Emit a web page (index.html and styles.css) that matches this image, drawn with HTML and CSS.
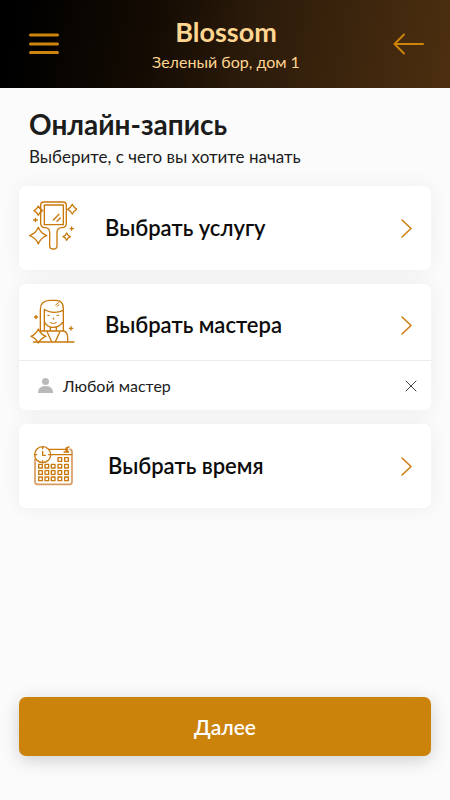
FILE: index.html
```html
<!DOCTYPE html>
<html lang="ru">
<head>
<meta charset="utf-8">
<meta name="viewport" content="width=device-width, initial-scale=1">
<title>Blossom</title>
<link rel="stylesheet" href="styles.css">
</head>
<body>
<header class="topbar">
  <button class="icon-button" type="button" aria-label="Меню">
    <svg width="30" height="22" viewBox="0 0 30 22"><path d="M1.5 2h27M1.5 11h27M1.5 19.500h27" stroke-width="3"/></svg>
  </button>
  <div class="salon">
    <div class="salon-name">Blossom</div>
    <div class="salon-address">Зеленый бор, дом 1</div>
  </div>
  <button class="icon-button" type="button" aria-label="Назад">
    <svg width="31" height="22" viewBox="0 0 31 22"><path d="M30 11H2M11 1.500L1.500 11l9.500 9.500" stroke-width="2"/></svg>
  </button>
</header>
<main class="page">
  <h1 class="title">Онлайн-запись</h1>
  <p class="subtitle">Выберите, с чего вы хотите начать</p>
  <div class="cards">
    <section class="card">
      <button class="choice" type="button">
        <svg class="picture" width="48" height="54" viewBox="27 33 144 162">
          <path d="M72 36h57q10 0 10 10v54q0 13-14 13-14 1-14 14v40q0 10-11 10t-11-10v-40q0-13-14-14-13 0-13-13V46q0-10 10-10z"/>
          <path d="M73 45h57v59H73zM100 90l17-17M111 94l10-10"/>
          <path d="M55 48q4 10 13 14-9 4-13 14-4-10-13-14 9-4 13-14zM157 43q4 10 14 15-10 4-14 14-5-10-14-14 9-5 14-15zM55 112q7 18 25 25-18 7-25 25-7-18-26-25 19-7 26-25zM140 129q3 8 11 11-8 3-11 11-3-8-11-11 8-3 11-11z"/>
          <path d="M41 90h11M46.500 85v10M150 116h10M155 111v10"/>
        </svg>
        <span class="choice-name">Выбрать услугу</span>
        <svg class="chevron" width="11" height="19" viewBox="0 0 11 19"><path d="M1 1l9 8.500L1 18"/></svg>
      </button>
    </section>
    <section class="card">
      <button class="choice choice-picked" type="button">
        <svg class="picture" width="48" height="54" viewBox="27 24 144 162">
          <path d="M61 124V59q0-28 29-28h18q22 0 22 25v66M73 122V58q12 9 30 9 14 0 25-5M73 95q8 17 27 17 18 0 27-14"/>
          <path d="M91 112v11h18v-11M62 123h29M82 127l13 28M109 123h22q12 2 12 22v10M119 127l-13 28"/>
          <path class="fine" d="M83 76h5M111 76h5M100 84l-1 3h3M91 98q9 7 18 0M107 45l8-7M111 49l6-5"/>
          <path class="filled" d="M55 117q7 16 23 22-16 6-23 20-7-14-22-20 15-6 22-22z"/>
          <path d="M40 156h122M43 81h10M48 76v10M148 115h10M153 110v10"/>
        </svg>
        <span class="choice-name">Выбрать мастера</span>
        <svg class="chevron" width="11" height="19" viewBox="0 0 11 19"><path d="M1 1l9 8.500L1 18"/></svg>
      </button>
      <div class="picked">
        <svg class="person" width="15" height="15" viewBox="0 0 15 15"><circle cx="7.500" cy="3.500" r="3.500"/><path d="M0 15v-1.500Q1 8 7.500 8t7.500 5.500V15z"/></svg>
        <span class="picked-name">Любой мастер</span>
        <button class="clear" type="button" aria-label="Убрать мастера">
          <svg width="12" height="12" viewBox="0 0 12 12"><path d="M1 1l10 10M11 1L1 11"/></svg>
        </button>
      </div>
    </section>
    <section class="card">
      <button class="choice" type="button">
        <svg class="picture" width="51" height="54" viewBox="27 15 153 162">
          <path class="frame" d="M45 76v67q0 8 8 8h95q8 0 8-8V53q0-6-6-7"/>
          <path d="M88 46h55M91 62h64M132 54h14l-7-6q-1-7 8-9M138 42v10"/>
          <circle class="filled" cx="68" cy="62" r="24"/>
          <path d="M68 52v12h8M68 38v6M68 80v6M44 62h6M86 62h6"/>
          <path d="M114 71h11v11h-11zM134 71h11v11h-11zM56 91h11v11H56zM75 91h11v11H75zM94 91h11v11H94zM114 91h11v11h-11zM134 91h11v11h-11zM56 110h11v11H56zM75 110h11v11H75zM94 110h11v11H94zM114 110h11v11h-11zM134 110h11v11h-11zM56 129h11v11H56zM75 129h11v11H75zM94 129h11v11H94zM114 129h11v11h-11zM134 129h11v11h-11z"/>
        </svg>
        <span class="choice-name">Выбрать время</span>
        <svg class="chevron" width="11" height="19" viewBox="0 0 11 19"><path d="M1 1l9 8.500L1 18"/></svg>
      </button>
    </section>
  </div>
  <button class="next" type="button">Далее</button>
</main>
</body>
</html>
```
FILE: styles.css
```css
* {
  box-sizing: border-box;
}

body {
  margin: 0;
  min-height: 100vh;
  display: flex;
  flex-direction: column;
  background: #fbfbfb;
  color: #1c1c1c;
  font-family: Lato, "Open Sans", sans-serif;
}

button {
  margin: 0;
  padding: 0;
  border: 0;
  background: none;
  color: inherit;
  font: inherit;
  cursor: pointer;
}

svg {
  display: block;
  flex: none;
  fill: none;
  stroke-linecap: round;
  stroke-linejoin: round;
}

.topbar {
  display: flex;
  align-items: center;
  justify-content: space-between;
  min-height: 88px;
  padding: 0 26px 0 29px;
  background: linear-gradient(100deg, #000 5%, #150c03 35%, #2b1b0a 55%, #4d2f10 100%);
}

.icon-button {
  stroke: #cd850c;
}

.salon {
  padding-top: 3px;
  color: #ffd691;
  text-align: center;
}

.salon-name {
  font-size: 27px;
  line-height: 32px;
  font-weight: 700;
}

.salon-address {
  font-size: 16px;
  line-height: 28px;
}

.page {
  flex: 1;
  display: flex;
  flex-direction: column;
  padding: 19px 19px 44px;
}

.title {
  margin: 0 10px;
  font-size: 28px;
  line-height: 34px;
  font-weight: 700;
}

.subtitle {
  margin: 5px 10px 18px;
  font-size: 17px;
  line-height: 22px;
}

.cards {
  display: flex;
  flex-direction: column;
  gap: 14px;
}

.card {
  border-radius: 7px;
  background: #fff;
  box-shadow: 0 0 20px rgba(0, 0, 0, 0.06);
}

.choice {
  display: flex;
  align-items: center;
  width: 100%;
  min-height: 84px;
  padding: 0 19px 0 10px;
  text-align: left;
}

.choice-picked {
  min-height: 76px;
  padding-top: 6px;
}

.picture {
  stroke: #c9780c;
  stroke-width: 4;
}

.fine {
  stroke-width: 3;
}

.filled {
  fill: #fff;
}

.frame {
  stroke: #d89a60;
  stroke-width: 5;
}

.choice-name {
  flex: 1;
  margin-left: 28px;
  color: #0c0c0c;
  font-size: 22px;
  line-height: 28px;
  font-weight: 600;
}

.chevron {
  stroke: #cd7a0c;
  stroke-width: 1.500;
}

.picked {
  display: flex;
  align-items: center;
  min-height: 50px;
  padding: 0 14px 0 19px;
  border-top: 1px solid #ebebeb;
}

.person {
  fill: #b9b9b9;
}

.picked-name {
  flex: 1;
  margin-left: 10px;
  font-size: 16px;
  line-height: 22px;
}

.clear {
  stroke: #444;
}

.next {
  margin-top: auto;
  min-height: 59px;
  border-radius: 7px;
  background: #cb830b;
  box-shadow: 0 4px 18px rgba(0, 0, 0, 0.18);
  color: #fff;
  font-size: 21px;
  font-weight: 600;
}
```
